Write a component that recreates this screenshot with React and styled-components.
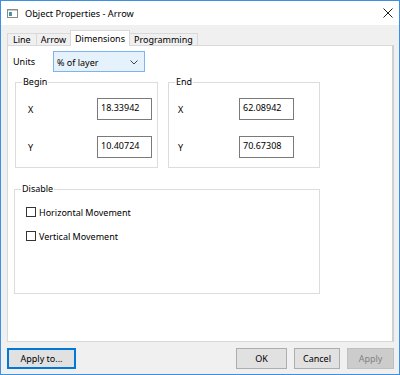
import React from "react";
import styled, { createGlobalStyle } from "styled-components";

const Global = createGlobalStyle`
  html, body { margin: 0; padding: 0; background: #fff; }
  body { font-family: "Noto Sans", "Liberation Sans", sans-serif; font-size: 9px; color: #000; }
  * { box-sizing: border-box; }
`;

const Window = styled.div`
  width: 400px;
  height: 375px;
  border: 1px solid #3d8fe0;
  display: flex;
  flex-direction: column;
  background: #f0f0f0;
  overflow: hidden;
`;

const TitleBar = styled.div`
  height: 24px;
  flex: none;
  background: #fff;
  display: flex;
  align-items: center;
  padding: 0 6px 0 6px;
`;

const Title = styled.div`
  margin-left: 7px;
  font-size: 9.2px;
  flex: 1;
`;

const Body = styled.div`
  flex: 1;
  display: flex;
  flex-direction: column;
  padding: 5px 5px 5px 6px;
`;

const TabStrip = styled.div`
  display: flex;
  align-items: flex-end;
  height: 16px;
  position: relative;
  z-index: 2;
  margin-bottom: -1px;
`;

const Tab = styled.div`
  height: ${(p) => (p.$active ? 16 : 13)}px;
  padding: 0 ${(p) => p.$pad}px;
  display: flex;
  align-items: center;
  background: ${(p) => (p.$active ? "#fff" : "#f0f0f0")};
  border: 1px solid #d9d9d9;
  border-bottom: ${(p) => (p.$active ? "none" : "1px solid #d9d9d9")};
  margin-left: -1px;
  &:first-child { margin-left: 0; }
  white-space: nowrap;
`;

const Panel = styled.div`
  flex: 1;
  background: #fff;
  border: 1px solid #d9d9d9;
  border-right: 2px solid #cfcfcf;
  display: flex;
  flex-direction: column;
  padding: 5px 0 0 5px;
`;

const UnitsRow = styled.div`
  display: flex;
  align-items: flex-start;
  height: 21px;
`;

const UnitsLabel = styled.div`
  width: 40px;
  padding-top: 4px;
`;

const Select = styled.div`
  width: 92px;
  height: 21px;
  border: 1px solid #7eb4ea;
  background: #e5f1fb;
  display: flex;
  align-items: center;
  justify-content: space-between;
  padding: 1px 6px 0 3px;
`;

const GroupsRow = styled.div`
  display: flex;
  gap: 10px;
  margin-top: 10px;
  margin-left: 2px;
`;

const Group = styled.div`
  position: relative;
  border: 1px solid #dcdcdc;
`;

const Legend = styled.span`
  position: absolute;
  top: -7px;
  left: 6px;
  background: #fff;
  padding: 0 1px;
  line-height: 12px;
`;

const CoordGrid = styled.div`
  display: grid;
  grid-template-columns: ${(p) => p.$labelW}px 55px;
  row-gap: 16px;
  align-items: center;
  padding: 15px ${(p) => p.$right}px 9px ${(p) => p.$left}px;
`;

const Field = styled.div`
  height: 22px;
  border: 1px solid #7a7a7a;
  padding: 3px 0 0 3px;
  line-height: 12px;
`;

const DisableGroup = styled(Group)`
  width: 306px;
  height: 105px;
  margin-top: 21px;
  margin-left: 1px;
  display: flex;
  flex-direction: column;
  gap: 12px;
  padding: 16px 0 0 11px;
`;

const CheckRow = styled.label`
  display: flex;
  align-items: center;
  height: 12px;
  gap: 3px;
`;

const Box = styled.span`
  width: 10px;
  height: 10px;
  border: 1px solid #333;
  background: #fff;
  flex: none;
`;

const ButtonRow = styled.div`
  display: flex;
  align-items: center;
  margin-top: 6px;
  gap: 7px;
`;

const Button = styled.div`
  height: 21px;
  width: ${(p) => p.$w}px;
  display: flex;
  align-items: center;
  justify-content: center;
  background: ${(p) => (p.$disabled ? "#cccccc" : "#e1e1e1")};
  color: ${(p) => (p.$disabled ? "#838383" : "#000")};
  border: 1px solid ${(p) => (p.$disabled ? "#bfbfbf" : p.$focus ? "#0078d7" : "#adadad")};
  box-shadow: ${(p) => (p.$focus ? "inset 0 0 0 1px #0078d7" : "none")};
`;

const Spacer = styled.div`
  flex: 1;
`;

function AppIcon() {
  return (
    <svg width="11" height="9" viewBox="0 0 11 9">
      <rect x="0.5" y="0.5" width="10" height="8" fill="#fff" stroke="#8a8a8a" />
      <rect x="1" y="1" width="9" height="1" fill="#c8c8c8" />
      <rect x="2" y="3" width="2" height="4" fill="#3f9b86" />
      <rect x="4" y="3" width="1" height="4" fill="#5a8fd0" />
    </svg>
  );
}

function CloseIcon() {
  return (
    <svg width="10" height="10" viewBox="0 0 10 10">
      <path d="M0.5 0.5 L9.5 9.5 M9.5 0.5 L0.5 9.5" stroke="#222" strokeWidth="1" />
    </svg>
  );
}

function Chevron() {
  return (
    <svg width="8" height="5" viewBox="0 0 8 5">
      <path d="M0.5 0.5 L4 4 L7.5 0.5" fill="none" stroke="#444" strokeWidth="1" />
    </svg>
  );
}

export default function App() {
  return (
    <>
      <Global />
      <Window>
        <TitleBar>
          <AppIcon />
          <Title>Object Properties - Arrow</Title>
          <CloseIcon />
        </TitleBar>
        <Body>
          <TabStrip>
            <Tab $pad={5}>Line</Tab>
            <Tab $pad={4}>Arrow</Tab>
            <Tab $active $pad={4}>Dimensions</Tab>
            <Tab $pad={4}>Programming</Tab>
          </TabStrip>
          <Panel>
            <UnitsRow>
              <UnitsLabel>Units</UnitsLabel>
              <Select>
                <span>% of layer</span>
                <Chevron />
              </Select>
            </UnitsRow>
            <GroupsRow>
              <Group>
                <Legend>Begin</Legend>
                <CoordGrid $labelW={69} $left={12} $right={5}>
                  <span>X</span>
                  <Field>18.33942</Field>
                  <span>Y</span>
                  <Field>10.40724</Field>
                </CoordGrid>
              </Group>
              <Group>
                <Legend>End</Legend>
                <CoordGrid $labelW={61} $left={9} $right={25}>
                  <span>X</span>
                  <Field>62.08942</Field>
                  <span>Y</span>
                  <Field>70.67308</Field>
                </CoordGrid>
              </Group>
            </GroupsRow>
            <DisableGroup>
              <Legend>Disable</Legend>
              <CheckRow>
                <Box />
                Horizontal Movement
              </CheckRow>
              <CheckRow>
                <Box />
                Vertical Movement
              </CheckRow>
            </DisableGroup>
          </Panel>
          <ButtonRow>
            <Button $w={69} $focus>Apply to...</Button>
            <Spacer />
            <Button $w={51}>OK</Button>
            <Button $w={46}>Cancel</Button>
            <Button $w={47} $disabled>Apply</Button>
          </ButtonRow>
        </Body>
      </Window>
    </>
  );
}
